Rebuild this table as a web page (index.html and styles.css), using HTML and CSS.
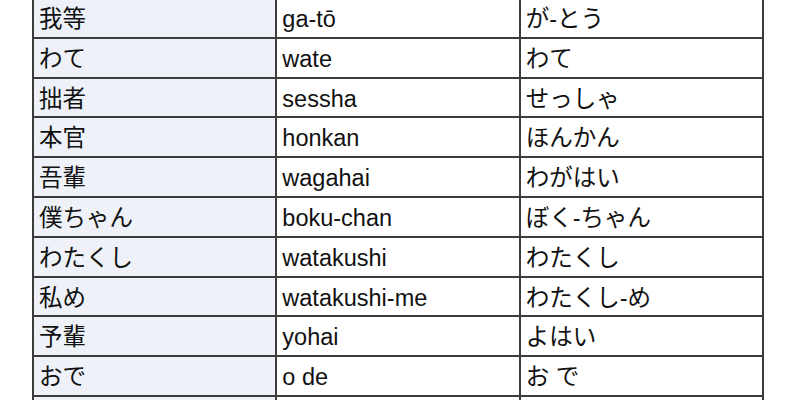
FILE: index.html
```html
<!DOCTYPE html>
<html lang="ja">
<head>
<meta charset="utf-8">
<link rel="stylesheet" href="styles.css">
</head>
<body>
<table class="pron">
<tbody>
<tr><td class="word">我等</td><td>ga-tō</td><td>が-とう</td></tr>
<tr><td class="word">わて</td><td>wate</td><td>わて</td></tr>
<tr><td class="word">拙者</td><td>sessha</td><td>せっしゃ</td></tr>
<tr><td class="word">本官</td><td>honkan</td><td>ほんかん</td></tr>
<tr><td class="word">吾輩</td><td>wagahai</td><td>わがはい</td></tr>
<tr><td class="word">僕ちゃん</td><td>boku-chan</td><td>ぼく-ちゃん</td></tr>
<tr><td class="word">わたくし</td><td>watakushi</td><td>わたくし</td></tr>
<tr><td class="word">私め</td><td>watakushi-me</td><td>わたくし-め</td></tr>
<tr><td class="word">予輩</td><td>yohai</td><td>よはい</td></tr>
<tr><td class="word">おで</td><td>o de</td><td>お で</td></tr>
<tr><td class="word"></td><td></td><td></td></tr>
</tbody>
</table>
</body>
</html>
```
FILE: styles.css
```css
html, body {
  margin: 0;
  padding: 0;
  background: #ffffff;
  overflow: hidden;
}
body {
  height: 400px;
  font-family: "Liberation Sans", "Noto Sans CJK JP", sans-serif;
  color: #111111;
}
.pron {
  border-collapse: collapse;
  table-layout: fixed;
  width: 732px;
  margin: -3px 0 0 32px;
  font-size: 23.5px;
}
.pron td {
  border: 2px solid #3c3c3c;
  padding: 3px 5px 0 5px;
  line-height: 34.8px;
  vertical-align: middle;
  white-space: nowrap;
  overflow: hidden;
}
.pron td.word {
  background: #eef2f8;
}
```
